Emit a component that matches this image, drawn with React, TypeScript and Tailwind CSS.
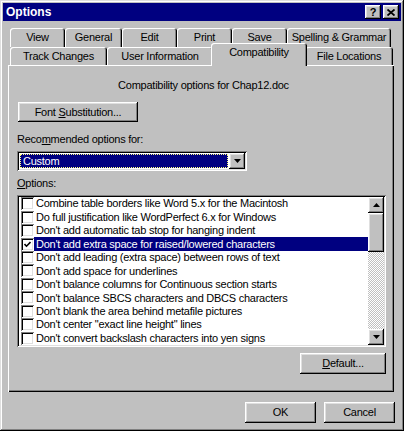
const raised =
  "shadow-[inset_-1px_-1px_0_#000,inset_1px_1px_0_#fff,inset_-2px_-2px_0_#808080,inset_2px_2px_0_#dfdfdf]";

const rows = [
  "Combine table borders like Word 5.x for the Macintosh",
  "Do full justification like WordPerfect 6.x for Windows",
  "Don't add automatic tab stop for hanging indent",
  "Don't add extra space for raised/lowered characters",
  "Don't add leading (extra space) between rows of text",
  "Don't add space for underlines",
  "Don't balance columns for Continuous section starts",
  "Don't balance SBCS characters and DBCS characters",
  "Don't blank the area behind metafile pictures",
  "Don't center \"exact line height\" lines",
  "Don't convert backslash characters into yen signs",
];

function Tab({ label, w }: { label: string; w: string }) {
  return (
    <div
      className={`${w} h-full flex items-center justify-center rounded-t-[3px] bg-[#c0c0c0] whitespace-nowrap shadow-[inset_1px_1px_0_#fff,inset_-1px_0_0_#000,inset_-2px_0_0_#808080]`}
    >
      {label}
    </div>
  );
}

function Check({ checked }: { checked?: boolean }) {
  return (
    <span className="w-[13px] h-[13px] shrink-0 bg-white flex items-center justify-center shadow-[inset_1px_1px_0_#808080,inset_-1px_-1px_0_#fff,inset_2px_2px_0_#000,inset_-2px_-2px_0_#dfdfdf]">
      {checked && (
        <svg width="7" height="7" viewBox="0 0 7 7">
          <path d="M0.5 3 L2.5 5.2 L6.5 1" stroke="#000" strokeWidth="1.6" fill="none" />
        </svg>
      )}
    </span>
  );
}

function Arrow({ up }: { up?: boolean }) {
  return (
    <svg width="7" height="4" viewBox="0 0 7 4">
      <polygon points={up ? "3.5 0 7 4 0 4" : "0 0 7 0 3.5 4"} fill="#000" />
    </svg>
  );
}

export default function App() {
  return (
    <div className="w-[404px] h-[431px] bg-[#c0c0c0] p-[3px] flex flex-col font-['Liberation_Sans',Arial,sans-serif] text-[11px] tracking-[-0.25px] text-black shadow-[inset_-1px_-1px_0_#000,inset_1px_1px_0_#dfdfdf,inset_-2px_-2px_0_#808080,inset_2px_2px_0_#fff]">
      {/* Title bar */}
      <div className="h-[18px] bg-[#000080] flex items-center justify-between pl-[3px] pr-[2px]">
        <span className="text-white font-bold text-[12px] tracking-normal">Options</span>
        <div className="flex gap-[2px]">
          <span className={`w-[16px] h-[14px] bg-[#c0c0c0] ${raised} flex items-center justify-center font-bold text-[11px] leading-none`}>
            ?
          </span>
          <span className={`w-[16px] h-[14px] bg-[#c0c0c0] ${raised} flex items-center justify-center`}>
            <svg width="8" height="7" viewBox="0 0 8 7">
              <path d="M0.5 0.5 L7.5 6.5 M7.5 0.5 L0.5 6.5" stroke="#000" strokeWidth="1.8" />
            </svg>
          </span>
        </div>
      </div>

      {/* Tabs */}
      <div className="mt-[7px] ml-[7px] h-[19px] flex">
        <Tab label="View" w="w-[55px]" />
        <Tab label="General" w="w-[57px]" />
        <Tab label="Edit" w="w-[55px]" />
        <Tab label="Print" w="w-[55px]" />
        <Tab label="Save" w="w-[55px]" />
        <Tab label="Spelling & Grammar" w="w-[104px]" />
      </div>
      <div className="ml-[7px] h-[18px] flex items-start">
        <Tab label="Track Changes" w="w-[97px]" />
        <Tab label="User Information" w="w-[106px]" />
        <div className="relative z-10 -mt-[4px] -mx-[2px] w-[96px] h-[23px] pb-[4px] flex items-center justify-center rounded-t-[3px] bg-[#c0c0c0] shadow-[inset_1px_1px_0_#fff,inset_-1px_0_0_#000,inset_-2px_0_0_#808080]">
          Compatibility
        </div>
        <Tab label="File Locations" w="w-[88px]" />
      </div>

      {/* Panel */}
      <div className="ml-[5px] w-[386px] h-[327px] flex flex-col pl-[9px] pr-[8px] shadow-[inset_1px_1px_0_#fff,inset_-1px_-1px_0_#000,inset_-2px_-2px_0_#808080]">
        <div className="mt-[14px] h-[13px] leading-[13px] text-center pl-[4px]">
          Compatibility options for Chap12.doc
        </div>
        <div className={`mt-[10px] ml-[1px] w-[120px] h-[20px] flex items-center justify-center ${raised}`}>
          <span>
            Font <u>S</u>ubstitution...
          </span>
        </div>
        <div className="mt-[11px] h-[13px] leading-[13px]">
          Reco<u>m</u>mended options for:
        </div>
        <div className="mt-[5px] w-[230px] h-[20px] bg-white flex p-[2px] shadow-[inset_1px_1px_0_#808080,inset_-1px_-1px_0_#fff,inset_2px_2px_0_#000,inset_-2px_-2px_0_#dfdfdf]">
          <div className="flex-1 m-[1px] bg-[#000080] border border-dotted border-[#ffff80] text-white flex items-center pl-[2px]">
            Custom
          </div>
          <div className={`w-[16px] h-full bg-[#c0c0c0] ${raised} flex items-center justify-center`}>
            <Arrow />
          </div>
        </div>
        <div className="mt-[6px] h-[13px] leading-[13px]">
          <u>O</u>ptions:
        </div>
        <div className="mt-[5px] w-[369px] h-[152px] bg-white p-[2px] flex shadow-[inset_1px_1px_0_#808080,inset_-1px_-1px_0_#fff,inset_2px_2px_0_#000,inset_-2px_-2px_0_#dfdfdf]">
          <div className="flex-1 flex flex-col">
            {rows.map((r, i) => (
              <div key={r} className="h-[13.45px] flex items-center pl-[2px]">
                <Check checked={i === 3} />
                <span
                  className={`flex-1 h-full flex items-center pl-[2px] whitespace-nowrap ${
                    i === 3 ? "bg-[#000080] text-white" : ""
                  }`}
                >
                  {r}
                </span>
              </div>
            ))}
          </div>
          <div className="w-[16px] h-full flex flex-col bg-[repeating-conic-gradient(#fff_0_25%,#c0c0c0_0_50%)] bg-[length:2px_2px]">
            <div className={`h-[16px] bg-[#c0c0c0] ${raised} flex items-center justify-center`}>
              <Arrow up />
            </div>
            <div className={`h-[39px] bg-[#c0c0c0] ${raised}`} />
            <div className="flex-1" />
            <div className={`h-[16px] bg-[#c0c0c0] ${raised} flex items-center justify-center`}>
              <Arrow />
            </div>
          </div>
        </div>
        <div className="mt-[6px] flex justify-end">
          <div className={`w-[86px] h-[21px] flex items-center justify-center ${raised}`}>
            <span>
              <u>D</u>efault...
            </span>
          </div>
        </div>
      </div>

      {/* Dialog buttons */}
      <div className="mt-[10px] flex justify-end gap-[8px] pr-[6px]">
        <div className={`w-[71px] h-[21px] flex items-center justify-center ${raised}`}>OK</div>
        <div className={`w-[71px] h-[21px] flex items-center justify-center ${raised}`}>Cancel</div>
      </div>
    </div>
  );
}
